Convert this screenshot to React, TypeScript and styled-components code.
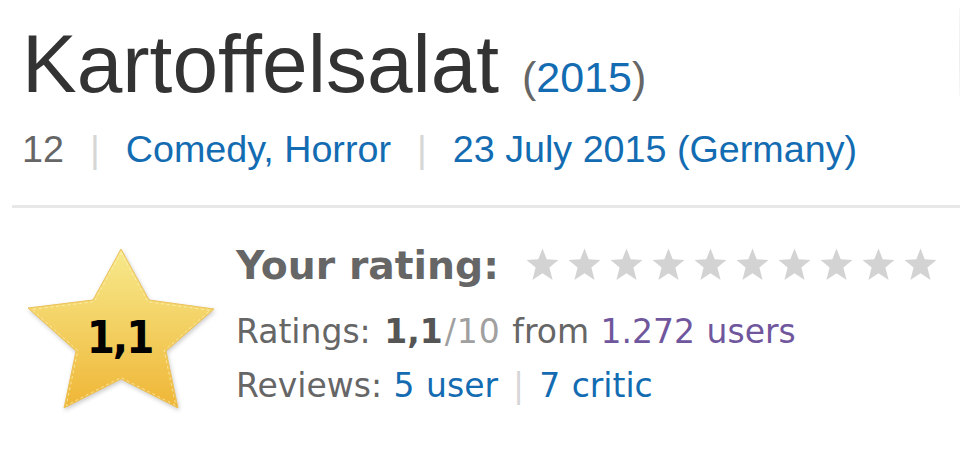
import styled, { createGlobalStyle } from "styled-components";

const GlobalStyle = createGlobalStyle`
    html, body {
        margin: 0;
        padding: 0;
        background: #ffffff;
        overflow: hidden;
    }
`;

const Page = styled.div`
    width: 960px;
    height: 467px;
    padding-left: 12px;
    box-sizing: border-box;
    font-family: "Liberation Sans", Arial, sans-serif;
`;

const TitleRow = styled.div`
    display: flex;
    justify-content: space-between;
    align-items: flex-start;
`;

const Title = styled.h1`
    margin: 23px 0 0 10px;
    font-size: 82px;
    line-height: 1;
    font-weight: normal;
    color: #333333;
    white-space: nowrap;
`;

const Year = styled.span`
    font-size: 43px;
    color: #666666;

    a {
        color: #136cb2;
        text-decoration: none;
    }
`;

const Edge = styled.div`
    width: 1px;
    height: 88px;
    margin-top: 8px;
    background: linear-gradient(to bottom, #f6f6f6, #ededed 60%, #f8f8f8);
`;

const SubText = styled.div`
    margin: 26px 0 0 10px;
    font-size: 37.7px;
    line-height: 1;
    color: #666666;
    white-space: nowrap;

    a {
        color: #136cb2;
        text-decoration: none;
    }
`;

const Ghost = styled.span<{ $size?: number }>`
    color: #d6d6d6;
    margin: 0 ${(p) => p.$size ?? 26}px;
`;

const Rule = styled.hr`
    margin: 36px 0 0 0;
    border: none;
    height: 3px;
    background: #e8e8e8;
`;

const RatingArea = styled.div`
    display: flex;
    align-items: flex-start;
    padding: 38px 0 0 16px;
`;

const StarBadge = styled.div`
    display: grid;
    margin-top: 2px;

    & > * {
        grid-area: 1 / 1;
    }

    svg {
        filter: drop-shadow(1px 2px 2px rgba(0, 0, 0, 0.2));
    }
`;

const BadgeValue = styled.span`
    position: relative;
    z-index: 1;
    align-self: start;
    justify-self: center;
    margin: 67px 0 0 0;
    font-family: "DejaVu Sans Condensed", "DejaVu Sans", Verdana, sans-serif;
    font-stretch: condensed;
    font-weight: bold;
    font-size: 45px;
    line-height: 1;
    letter-spacing: -2px;
    padding-right: 7px;
    color: #000000;
`;

const Details = styled.div`
    margin-left: 18px;
    font-family: "DejaVu Sans", Verdana, sans-serif;
    color: #666666;
    white-space: nowrap;
`;

const YourRating = styled.div`
    display: flex;
    align-items: center;
    gap: 27px;
    height: 40px;
`;

const YourLabel = styled.span`
    font-size: 39.3px;
    font-weight: bold;
    line-height: 40px;
`;

const Stars = styled.div`
    display: flex;
    gap: 9px;
    margin-top: -3px;
`;

const InfoLine = styled.div<{ $first?: boolean }>`
    font-size: 33px;
    line-height: 54px;
    word-spacing: 1px;
    margin-top: ${(p) => (p.$first ? "19px" : "0")};

    a {
        color: #136cb2;
        text-decoration: none;
    }
`;

const Strong = styled.strong`
    color: #555555;
    margin-left: 2px;
`;

const Light = styled.span`
    color: #a0a0a0;
    margin-left: 2px;
    letter-spacing: 1px;
`;

const Users = styled.a`
    && {
        color: #70579d;
    }
`;

function GrayStar() {
    return (
        <svg width="33" height="33" viewBox="0 0 33 33">
            <polygon
                points="16.5,0.5 20.7,11.2 32.5,12 23.4,19.6 26.6,32 16.5,25.2 6.4,32 9.6,19.6 0.5,12 12.3,11.2"
                fill="#d3d3d3"
                style={{ filter: "blur(0.6px)" }}
            />
        </svg>
    );
}

function BigStar() {
    const pts = "93,1 121,52 186,61 138,103 150,160 93,131 36,160 48,103 0,60 65,52";
    return (
        <svg width="190" height="166" viewBox="0 0 190 166">
            <defs>
                <linearGradient id="gold" x1="0" y1="0" x2="0" y2="1">
                    <stop offset="0" stopColor="#f7e98c" />
                    <stop offset="0.5" stopColor="#f3d062" />
                    <stop offset="1" stopColor="#efb636" />
                </linearGradient>
            </defs>
            <polygon points={pts} fill="url(#gold)" stroke="#ecc15a" strokeWidth="1" strokeLinejoin="round" />
            <polygon
                points={pts}
                fill="none"
                stroke="#fff6c0"
                strokeOpacity="0.7"
                strokeWidth="1"
                strokeDasharray="3 3"
                transform="translate(93 95) scale(0.96) translate(-93 -95)"
            />
        </svg>
    );
}

export default function App() {
    return (
        <Page>
            <GlobalStyle />
            <TitleRow>
                <Title>
                    Kartoffelsalat{" "}
                    <Year>
                        (<a href="#">2015</a>)
                    </Year>
                </Title>
                <Edge />
            </TitleRow>
            <SubText>
                12
                <Ghost>|</Ghost>
                <a href="#">Comedy, Horror</a>
                <Ghost>|</Ghost>
                <a href="#">23 July 2015 (Germany)</a>
            </SubText>
            <Rule />
            <RatingArea>
                <StarBadge>
                    <BigStar />
                    <BadgeValue>1,1</BadgeValue>
                </StarBadge>
                <Details>
                    <YourRating>
                        <YourLabel>Your rating:</YourLabel>
                        <Stars>
                            {Array.from({ length: 10 }).map((_, i) => (
                                <GrayStar key={i} />
                            ))}
                        </Stars>
                    </YourRating>
                    <InfoLine $first>
                        Ratings: <Strong>1,1</Strong>
                        <Light>/10</Light> from <Users href="#">1.272 users</Users>
                    </InfoLine>
                    <InfoLine>
                        Reviews: <a href="#">5 user</a>
                        <Ghost $size={15}>|</Ghost>
                        <a href="#">7 critic</a>
                    </InfoLine>
                </Details>
            </RatingArea>
        </Page>
    );
}
